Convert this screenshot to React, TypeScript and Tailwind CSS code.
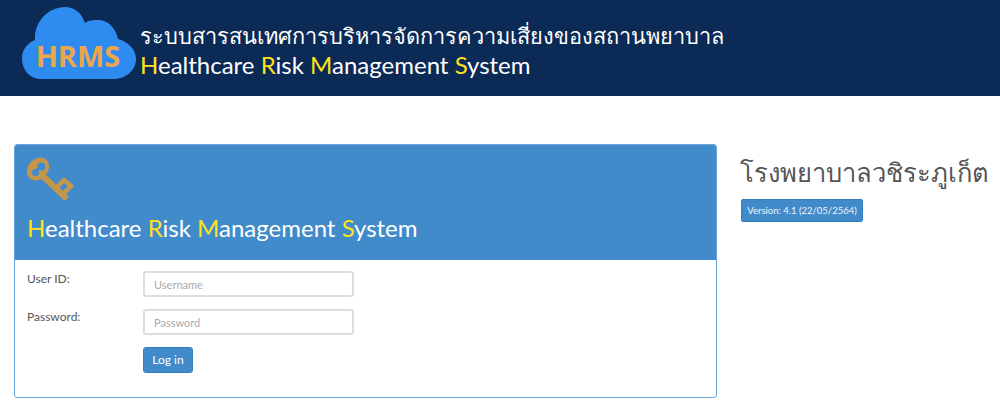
import React from "react";

const SystemName = () => (
  <>
    <span className="text-[#ffe11a]">H</span>ealthcare{" "}
    <span className="text-[#ffe11a]">R</span>isk{" "}
    <span className="text-[#ffe11a]">M</span>anagement{" "}
    <span className="text-[#ffe11a]">S</span>ystem
  </>
);

const CloudLogo = () => (
  <svg width="116" height="74" viewBox="0 0 116 74" className="shrink-0">
    <path
      d="M20 73 C8 73 1 63 1 52 C1 43 7 37 14 34 C13 15 28 1 44 1 C53 1 60 6 64 17 C68 14 73 14 77 14 C87 14 95 22 97 33 C107 36 115 43 115 53 C115 64 105 73 93 73 Z"
      fill="#2e8bf0"
    />
    <text x="57" y="61" textAnchor="middle" fontSize="29" fontWeight="700" fill="#eba64e" fontFamily="'Open Sans', sans-serif">
      HRMS
    </text>
  </svg>
);

const KeyIcon = () => (
  <svg width="48" height="46" viewBox="0 0 48 46" className="shrink-0">
    <ellipse cx="11" cy="13" rx="10" ry="12.5" fill="#c5974b" transform="rotate(40 11 13)" />
    <path d="M18 22 L38 41" stroke="#c5974b" strokeWidth="6" strokeLinecap="round" fill="none" />
    <path d="M29 32 L37 24 L44 30 L37 37" stroke="#c5974b" strokeWidth="4.5" strokeLinecap="butt" strokeLinejoin="miter" fill="none" />
    <circle cx="14.5" cy="10.5" r="4" fill="#428bca" />
    <circle cx="8.5" cy="16.5" r="3.6" fill="#428bca" />
    <path d="M9 15 L14 11" stroke="#428bca" strokeWidth="3.5" fill="none" />
  </svg>
);

const Field = ({ label, placeholder, type }: { label: string; placeholder: string; type: string }) => (
  <div className="flex items-start">
    <label className="w-[116px] text-[12px] leading-[16px] text-[#555]">{label}</label>
    <input
      type={type}
      placeholder={placeholder}
      className="h-[26px] w-[211px] rounded-[3px] border-2 border-[#dddddd] bg-white px-[9px] text-[11px] outline-none placeholder:text-[#aaaaaa]"
    />
  </div>
);

export default function App() {
  return (
    <div className="h-[413px] w-[1000px] overflow-hidden bg-white font-['Lato','Open_Sans','Noto_Sans',sans-serif]">
      <header className="flex h-[96px] items-start gap-[3px] bg-[#0b2a56] pl-[21px] pt-[6px]">
        <CloudLogo />
        <div className="pt-[16px] text-white">
          <div className="text-[21.75px] leading-[29px]">ระบบสารสนเทศการบริหารจัดการความเสี่ยงของสถานพยาบาล</div>
          <div className="text-[24px] leading-[28px]">
            <SystemName />
          </div>
        </div>
      </header>

      <main className="flex gap-[23px] pl-[14px] pt-[48px]">
        <section className="h-[254px] w-[703px] shrink-0 overflow-hidden rounded-[3px] border border-[#6ba6de]">
          <div className="h-[115px] bg-[#428bca] pl-[12px] pt-[11px]">
            <KeyIcon />
            <div className="mt-[11px] text-[24px] leading-[30px] text-white">
              <SystemName />
            </div>
          </div>
          <form className="flex flex-col gap-[12px] pl-[12px] pt-[11px]">
            <Field label="User ID:" placeholder="Username" type="text" />
            <Field label="Password:" placeholder="Password" type="password" />
            <button
              type="button"
              className="ml-[116px] h-[26px] w-[50px] rounded-[3px] border border-[#357ebd] bg-[#428bca] text-[12px] text-white"
            >
              Log in
            </button>
          </form>
        </section>

        <aside className="shrink-0 pt-[8px]">
          <h1 className="whitespace-nowrap text-[25.5px] font-normal leading-[40px] text-[#555]">โรงพยาบาลวชิระภูเก็ต</h1>
          <span className="mt-[7px] ml-[1px] inline-block h-[23px] w-[122px] rounded-[2px] border border-[#357ebd] bg-[#428bca] text-center text-[9.5px] leading-[21px] text-[#eef5fb]">
            Version: 4.1 (22/05/2564)
          </span>
        </aside>
      </main>
    </div>
  );
}
